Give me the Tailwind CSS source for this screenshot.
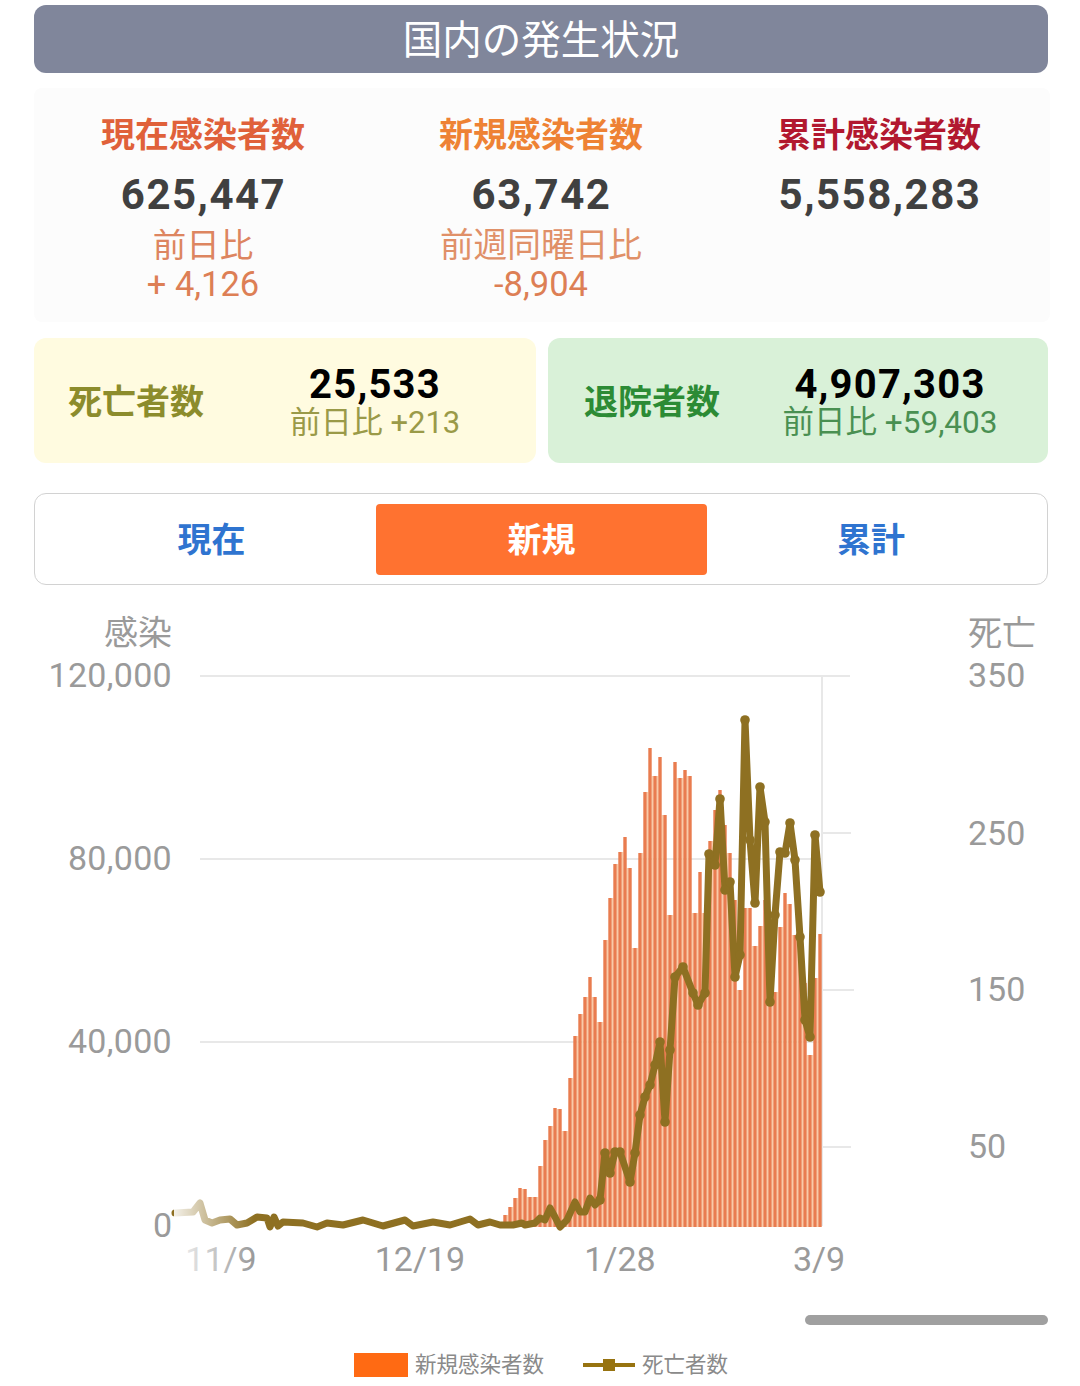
<!DOCTYPE html>
<html lang="ja">

<head>
    <meta charset="UTF-8">
    <title>国内の発生状況</title>
    <script src="https://cdn.jsdelivr.net/npm/@tailwindcss/browser@4"></script>
</head>

<body class="bg-white overflow-hidden font-['Roboto','Noto_Sans_CJK_JP',sans-serif]">
    <div class="w-[1080px] h-[1386px] overflow-hidden">
        <div class="pl-[34px] pr-[32px] pt-[5px]">
            <h1 class="h-[68px] pt-[3px] rounded-xl bg-[#80869b] flex items-center justify-center text-white text-[39.5px] font-normal">国内の発生状況</h1>

            <div class="mt-[15px] w-[1016px] h-[234px] rounded-lg bg-[#fcfcfc] grid grid-cols-[338px_338px_338px] text-center pt-[30px]">
                <div>
                    <div class="text-[34px] leading-[34px] font-bold text-[#e0613a]">現在感染者数</div>
                    <div class="mt-[20px] pl-[1px] text-[42px] leading-[46px] font-bold tracking-[1.5px] text-[#404040]">625,447</div>
                    <div class="mt-[9px] text-[33.5px] leading-[38px] text-[#dd8560]">前日比</div>
                    <div class="text-[34.5px] leading-[38px] text-[#dd7f55]">+ 4,126</div>
                </div>
                <div>
                    <div class="text-[34px] leading-[34px] font-bold text-[#ee8234]">新規感染者数</div>
                    <div class="mt-[20px] pl-[1px] text-[42px] leading-[46px] font-bold tracking-[1.5px] text-[#404040]">63,742</div>
                    <div class="mt-[9px] text-[33.7px] leading-[38px] text-[#e09068]">前週同曜日比</div>
                    <div class="text-[34.5px] leading-[38px] text-[#dd7f55]">-8,904</div>
                </div>
                <div>
                    <div class="text-[34px] leading-[34px] font-bold text-[#b2182f]">累計感染者数</div>
                    <div class="mt-[20px] pl-[2px] text-[42px] leading-[46px] font-bold tracking-[1.5px] text-[#404040]">5,558,283</div>
                </div>
            </div>

            <div class="mt-[16px] flex gap-[12px] h-[125px]">
                <div class="w-[502px] rounded-xl bg-[#fffbe0] flex items-center pl-[34px]">
                    <div class="w-[136px] mt-[2px] text-[34px] leading-[38px] font-bold text-[#8c8c2c] whitespace-nowrap">死亡者数</div>
                    <div class="w-[240px] ml-[51px] mt-[1px] text-center">
                        <div class="text-[40px] leading-[44px] font-bold tracking-[1.2px] text-black">25,533</div>
                        <div class="mt-[-1px] text-[31px] leading-[34px] text-[#9a9a48]">前日比 +213</div>
                    </div>
                </div>
                <div class="w-[500px] rounded-xl bg-[#d9f1d8] flex items-center pl-[36px]">
                    <div class="w-[136px] mt-[2px] text-[34px] leading-[38px] font-bold text-[#2c8b35] whitespace-nowrap">退院者数</div>
                    <div class="w-[240px] ml-[50px] mt-[1px] text-center">
                        <div class="text-[40px] leading-[44px] font-bold tracking-[1.2px] text-black">4,907,303</div>
                        <div class="mt-[-1px] text-[31.5px] leading-[34px] text-[#4a9052]">前日比 +59,403</div>
                    </div>
                </div>
            </div>

            <div class="mt-[30px] h-[92px] rounded-xl border border-[#d2d2d2] bg-white grid grid-cols-[341px_331px_340px] items-center text-center text-[34px] font-bold">
                <div class="pl-[12px] pt-[2px] text-[#2f74d0]">現在</div>
                <div class="h-[71px] pt-[2px] rounded bg-[#ff7230] text-white flex items-center justify-center">新規</div>
                <div class="pr-[12px] pt-[2px] text-[#2f74d0]">累計</div>
            </div>
        </div>

        <!-- chart: svg uses page coordinates, y starts at 585 -->
        <div class="relative w-[1080px] h-[801px] text-[34px] leading-[40px] text-[#9a9a9a]">
            <svg id="chart" class="absolute inset-0" width="1080" height="801" viewBox="0 585 1080 801">
                <g stroke="#e8e8e8" stroke-width="2">
                    <line x1="200" y1="676" x2="850" y2="676" />
                    <line x1="200" y1="859" x2="822" y2="859" />
                    <line x1="200" y1="1042" x2="822" y2="1042" />
                    <line x1="822" y1="676" x2="822" y2="1226" />
                    <line x1="822" y1="833" x2="851" y2="833" />
                    <line x1="822" y1="990" x2="854" y2="990" />
                    <line x1="822" y1="1147" x2="851" y2="1147" />
                </g>
                <g id="gaps" fill="#f9cba6"></g>
                <g id="bars" fill="#e97c4f"></g>
                <polyline id="deaths" fill="none" stroke="#8e7022" stroke-width="7" stroke-linejoin="round" stroke-linecap="round" />
                <g id="dots" fill="#8e7022"></g>
            </svg>

            <div class="absolute right-[908px] top-[28px]">感染</div>
            <div class="absolute right-[908px] top-[70px] tracking-[0.3px]">120,000</div>
            <div class="absolute right-[908px] top-[253px] tracking-[0.3px]">80,000</div>
            <div class="absolute right-[908px] top-[436px] tracking-[0.3px]">40,000</div>
            <div class="absolute right-[908px] top-[620px]">0</div>

            <div class="absolute left-[968px] top-[28px]">死亡</div>
            <div class="absolute left-[968px] top-[70px]">350</div>
            <div class="absolute left-[968px] top-[228px]">250</div>
            <div class="absolute left-[968px] top-[384px]">150</div>
            <div class="absolute left-[968px] top-[541px]">50</div>

            <div class="absolute left-[121px] w-[200px] text-center top-[654px]">11/9</div>
            <div class="absolute left-[320px] w-[200px] text-center top-[654px]">12/19</div>
            <div class="absolute left-[520px] w-[200px] text-center top-[654px]">1/28</div>
            <div class="absolute left-[719px] w-[200px] text-center top-[654px]">3/9</div>

            <!-- the chart fades out at its left edge, over the line and the first date -->
            <div class="absolute left-[174px] top-[595px] w-[80px] h-[100px] bg-linear-to-r from-white/90 to-transparent"></div>

            <div class="absolute left-[805px] top-[730px] w-[243px] h-[10px] rounded-full bg-[#a0a0a0]"></div>

            <div class="absolute left-[354px] top-[768px] flex items-center text-[21.5px] leading-[24px] text-[#8a8a8a]">
                <span class="w-[54px] h-[24px] bg-[#ff6a13]"></span>
                <span class="ml-[7px]">新規感染者数</span>
                <span class="ml-[39px] relative w-[52px] h-[4px] bg-[#977310]">
                    <span class="absolute left-[20px] top-[-4px] w-[12px] h-[12px] bg-[#977310]"></span>
                </span>
                <span class="ml-[7px]">死亡者数</span>
            </div>
        </div>
    </div>

    <script>
        // bar tops in page px, one bar every 5px starting at x=505
        var tops = [1215, 1207, 1198, 1188, 1189, 1197, 1197, 1166, 1140, 1126, 1108, 1109, 1131, 1078, 1036, 1014, 997, 977, 997, 1022,
            940, 898, 864, 852, 837, 868, 948, 853, 792, 748, 776, 757, 815, 915, 762, 778, 770, 776, 913, 872,
            913, 841, 810, 790, 825, 853, 900, 990, 908, 908, 946, 926, 900, 960, 992, 927, 893, 904, 935, 938, 983, 1055, 978, 934];
        var base = 1227;
        var barsHtml = '';
        var gapsHtml = '';
        tops.forEach(function (t, i) {
            var x = 503.3 + i * 5;
            barsHtml += '<rect x="' + x + '" y="' + t + '" width="3.4" height="' + (base - t) + '"/>';
            if (i < tops.length - 1) {
                var g = Math.max(t, tops[i + 1]);
                gapsHtml += '<rect x="' + (x + 3.4) + '" y="' + g + '" width="1.6" height="' + (base - g) + '"/>';
            }
        });
        document.getElementById('bars').innerHTML = barsHtml;
        document.getElementById('gaps').innerHTML = gapsHtml;

        var pts = [[175, 1213], [193, 1212], [200, 1203], [205, 1220], [212, 1223], [220, 1220], [230, 1219], [237, 1225], [247, 1223], [257, 1217], [267, 1218], [270, 1227], [274, 1217], [278, 1226], [283, 1222], [303, 1223], [317, 1227], [327, 1223], [343, 1225], [363, 1220], [383, 1226], [405, 1220], [413, 1226], [433, 1222], [450, 1225], [470, 1219], [478, 1225], [490, 1222], [500, 1225], [513, 1225], [522, 1223], [525, 1225], [535, 1223], [540, 1218], [545, 1220], [550, 1208], [555, 1217], [560, 1227], [567, 1220], [575, 1202], [580, 1212], [585, 1212], [590, 1198], [595, 1205], [600, 1200], [605, 1153], [610, 1173], [615, 1152], [620, 1152], [630, 1182], [635, 1153], [640, 1115], [645, 1097], [650, 1085], [655, 1065], [660, 1042], [665, 1122], [670, 1050], [675, 977], [683, 967], [693, 993], [698, 1005], [705, 993], [709, 854], [715, 865], [720, 799], [725, 890], [730, 882], [735, 977], [740, 955], [745, 720], [750, 840], [755, 903], [760, 787], [765, 822], [770, 1002], [775, 915], [780, 852], [785, 853], [790, 823], [795, 860], [800, 937], [805, 1020], [810, 1037], [815, 835], [820, 892]];
        document.getElementById('deaths').setAttribute('points', pts.map(function (p) { return p.join(','); }).join(' '));
        var dotsHtml = '';
        pts.forEach(function (p) {
            if (p[0] >= 600) dotsHtml += '<circle cx="' + p[0] + '" cy="' + p[1] + '" r="4.8"/>';
        });
        document.getElementById('dots').innerHTML = dotsHtml;
    </script>
</body>

</html>
